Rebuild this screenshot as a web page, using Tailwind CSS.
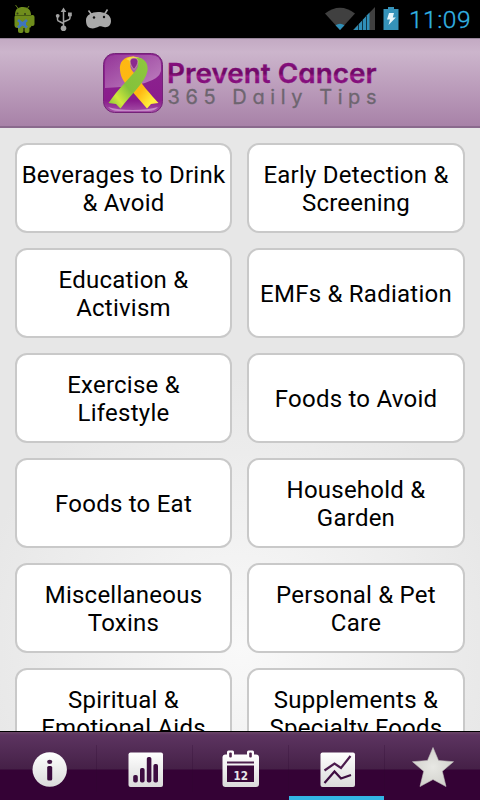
<!DOCTYPE html>
<html lang="en">
<head>
    <meta charset="UTF-8">
    <meta name="viewport" content="width=device-width, initial-scale=1.0">
    <title>Prevent Cancer - 365 Daily Tips</title>
    <script src="https://cdn.jsdelivr.net/npm/@tailwindcss/browser@4"></script>
</head>
<body class="w-[480px] h-[800px] overflow-hidden flex flex-col bg-black font-['Roboto',sans-serif]">
    <!-- Status bar -->
    <div class="h-[38px] shrink-0 bg-black flex items-center">
        <svg class="w-[120px] h-[38px]" viewBox="0 0 120 38">
            <g fill="#6f8d1c">
                <path d="M15 15c0-6 3-8 8-8s8 3 8 8z"/>
                <path d="M15.500 5l3 4M29 6l-2 3" stroke="#5f7a1a" stroke-width="1"/>
                <rect x="14.500" y="14.500" width="17" height="13.500" rx="3"/>
                <rect x="30" y="15" width="4.500" height="11" rx="2"/>
                <rect x="18" y="26" width="5.500" height="7" rx="2"/>
                <rect x="24.500" y="26" width="5" height="7" rx="2"/>
            </g>
            <path d="M15 15.500h16" stroke="#485f12"/>
            <circle cx="17.500" cy="13.500" r="1" fill="#333c18"/>
            <circle cx="25" cy="14" r="1" fill="#333c18"/>
            <path d="M18 20l9 7.500M27 20l-9 7.500M19 23.500h7" stroke="#3f75bd" stroke-width="2.800" fill="none"/>
            <g stroke="#a3a3a3" stroke-width="1.500" fill="none">
                <path d="M63.500 11v16M57.500 16v3.500q0 1.500 2 2l4 2M70 15v3q0 1.500-2 2l-4.500 2"/>
            </g>
            <g fill="#a3a3a3">
                <path d="M63.500 7.500l2.800 4.500h-5.600z"/>
                <circle cx="63.500" cy="28.300" r="2.800"/>
                <circle cx="57.700" cy="15.800" r="1.900"/>
                <rect x="68" y="12.500" width="3.800" height="3.800"/>
            </g>
            <path d="M88.500 10.500l3 4M107.500 9.500l-2.500 4" stroke="#a9a9a9" stroke-width="1.600"/>
            <path d="M86 20c0-5 6-8 12-8s13 2 13 9c0 4-3 7-7 6-2 0-3-1-5-.500-3 1.500-6 2.500-9 1.500-3-1-4-4-4-8z" fill="#a9a9a9"/>
            <circle cx="94" cy="17.500" r="1.200" fill="#111"/>
            <circle cx="104" cy="17" r="1.200" fill="#111"/>
        </svg>
        <div class="flex-1"></div>
        <svg class="w-[78px] h-[38px]" viewBox="322 0 78 38">
            <path d="M325 13.500Q340 2 355 13.500L340 30z" fill="#404040"/>
            <path d="M335.500 25.200q4.500-3 9 0L340 30z" fill="#2f8fb8"/>
            <path d="M353 30L375 7v23z" fill="#404040"/>
            <path d="M353.500 30L369.500 12.500V30z" fill="#2f8fb8"/>
            <path d="M358.500 24v6M362.500 20v10M366.500 15v15" stroke="#123544" stroke-width="1"/>
            <path d="M383.500 9h4.500V7h6v2h4.500v21h-15z" fill="#3592b9"/>
            <path d="M389 13h5l-1.200 4.500h3L388.500 25l1.500-5.500h-3z" fill="#e8f5fa"/>
        </svg>
        <svg class="w-[80px] h-[38px]" viewBox="400 0 80 38">
            <text x="409" y="28" textLength="61.500" font-family="Roboto" font-size="24.500" font-weight="300" fill="#33b5e5" stroke="#33b5e5" stroke-width=".3">11:09</text>
        </svg>
    </div>

    <!-- Header with logo -->
    <div class="h-[90px] shrink-0 border-t border-[#98869b] border-b-2 border-b-[#8a6a8d] bg-linear-to-b from-[#c3aac3] via-[#ccb5cc] via-15% to-[#a882a8]">
        <svg class="w-[480px] h-[87px]" viewBox="0 39 480 87">
            <defs>
                <linearGradient id="badge" x1="0" y1="0" x2="0" y2="1">
                    <stop offset="0" stop-color="#8c2590"/>
                    <stop offset=".8" stop-color="#8a1c8c"/>
                    <stop offset="1" stop-color="#a653a8"/>
                </linearGradient>
                <linearGradient id="shine" x1="0" y1="0" x2="1" y2="1">
                    <stop offset="0" stop-color="#fff" stop-opacity=".08"/>
                    <stop offset="1" stop-color="#fff" stop-opacity=".45"/>
                </linearGradient>
                <linearGradient id="green" x1="1" y1="0" x2="0" y2="1">
                    <stop offset="0" stop-color="#8fc63e"/>
                    <stop offset=".55" stop-color="#84c23b"/>
                    <stop offset=".78" stop-color="#d2e83c"/>
                    <stop offset="1" stop-color="#75bd3c"/>
                </linearGradient>
                <linearGradient id="yellow" x1="0" y1="0" x2="1" y2="1">
                    <stop offset="0" stop-color="#fdb813"/>
                    <stop offset=".6" stop-color="#ffb812"/>
                    <stop offset=".85" stop-color="#fff23c"/>
                    <stop offset="1" stop-color="#fdd94a"/>
                </linearGradient>
                <linearGradient id="title" x1="0" y1="0" x2="0" y2="1">
                    <stop offset=".2" stop-color="#850f7d"/>
                    <stop offset=".5" stop-color="#6d0764"/>
                    <stop offset=".6" stop-color="#9c1c8a"/>
                    <stop offset=".7" stop-color="#850f7d"/>
                </linearGradient>
            </defs>
            <g transform="translate(103 53)">
                <rect x=".5" y=".5" width="59" height="59" rx="11" fill="url(#badge)" stroke="#742378"/>
                <path d="M2 12Q2 2 12 2H48Q58 2 58 12V18Q55 33 2 35z" fill="url(#shine)"/>
                <path d="M5 54Q9 58 15 58H45Q52 58 55 54Q45 57 30 57Q14 57 5 54z" fill="#c58bc7"/>
                <path d="M31 3.500C21 3 16 9 17 17C17.500 25 22 30 27 36L44 55.500L48 51L55.500 50C48 42 37 29 31 20C26 15 26 9 31 8z" fill="url(#yellow)"/>
                <path d="M23 6Q30 1 39 6Q36 9 34 8Q30 4.500 27 8z" fill="#f4dc45"/>
                <path d="M35 4.500C41 5 45.500 10 44.500 18C42 30 28 41 17.500 55.500L13 51L5.500 50C15 36 27 25 33 17C36 13 36 8 32 5z" fill="url(#green)"/>
                <path d="M31 5C36.500 5 36 11 31 16.500C26 11 25.500 5 31 5z" fill="#8b2890" stroke="#dccb9a" stroke-width=".6"/>
            </g>
            <text x="167" y="83.300" textLength="209.500" lengthAdjust="spacingAndGlyphs" font-family="Inter" font-size="26.500" font-weight="600" fill="url(#title)" stroke="url(#title)" stroke-width=".3" class="[font-feature-settings:'cv11']">Prevent Cancer</text>
            <text x="167.500" y="104.300" textLength="209" font-family="Inter" font-size="20" font-weight="400" fill="#6d656f" stroke="#6d656f" stroke-width=".3" class="[font-feature-settings:'cv11']">365 Daily Tips</text>
        </svg>
    </div>

    <!-- Categories -->
    <main class="h-[603px] shrink-0 overflow-hidden bg-[radial-gradient(circle_at_50%_86%,#f9f9f9,#e7e7e7_270px)] px-[15px] pt-[15px]">
        <div class="grid grid-cols-[217px_218px] auto-rows-[90px] gap-[15px] text-2xl/7 tracking-[0.24px] text-black text-center *:flex *:items-center *:justify-center *:bg-white *:border-2 *:border-[#c9c9c9] *:rounded-xl *:whitespace-nowrap *:pt-0.5">
            <button>Beverages to Drink<br>&amp; Avoid</button>
            <button>Early Detection &amp;<br>Screening</button>
            <button>Education &amp;<br>Activism</button>
            <button>EMFs &amp; Radiation</button>
            <button>Exercise &amp;<br>Lifestyle</button>
            <button>Foods to Avoid</button>
            <button>Foods to Eat</button>
            <button>Household &amp;<br>Garden</button>
            <button>Miscellaneous<br>Toxins</button>
            <button>Personal &amp; Pet<br>Care</button>
            <button>Spiritual &amp;<br>Emotional Aids</button>
            <button>Supplements &amp;<br>Specialty Foods</button>
        </div>
    </main>

    <!-- Tab bar -->
    <nav class="h-[69px] shrink-0 border-t border-black bg-[linear-gradient(#6b4668_0px,#5c3460_3px,#452047_37px,#340235_38px,#340235_100%)]">
        <svg class="w-[480px] h-[68px]" viewBox="0 732 480 68">
            <defs>
                <linearGradient id="icon" x1="0" y1="0" x2="0" y2="1">
                    <stop offset="0" stop-color="#fff"/>
                    <stop offset="1" stop-color="#dadada"/>
                </linearGradient>
                <radialGradient id="star">
                    <stop offset="0" stop-color="#e8e8e4"/>
                    <stop offset="1" stop-color="#d3d3ce"/>
                </radialGradient>
            </defs>
            <path d="M96.500 745v47M192.500 745v47M288.500 745v47M384.500 745v47" stroke="#2a0630" stroke-opacity=".25"/>

            <!-- info -->
            <circle cx="49.700" cy="769.500" r="17.200" fill="url(#icon)"/>
            <ellipse cx="49.700" cy="761.800" rx="2.600" ry="2.100" fill="#451947"/>
            <rect x="47.200" y="766" width="5" height="14.500" rx="1.500" fill="#3a0a3d"/>

            <!-- bar chart -->
            <rect x="128.500" y="752.500" width="34.500" height="34.500" rx="2" fill="url(#icon)"/>
            <g fill="#3d0d40">
                <rect x="133.200" y="775" width="4.600" height="7.500" rx="1.800"/>
                <rect x="140" y="768" width="4.600" height="14.500" rx="1.800"/>
                <rect x="146.800" y="757" width="4.600" height="25.500" rx="1.800"/>
                <rect x="153.400" y="764" width="4.600" height="18.500" rx="1.800"/>
            </g>

            <!-- calendar -->
            <rect x="222.500" y="754.500" width="36.500" height="32.500" rx="3" fill="url(#icon)"/>
            <rect x="227" y="750.500" width="7" height="8" rx="1.500" fill="#fff"/>
            <rect x="247" y="750.500" width="7" height="8" rx="1.500" fill="#fff"/>
            <rect x="229.200" y="752.500" width="2.600" height="5" rx="1" fill="#52264f"/>
            <rect x="249.200" y="752.500" width="2.600" height="5" rx="1" fill="#52264f"/>
            <path d="M227 762.500h27" stroke="#4c204d" stroke-width="2"/>
            <rect x="227" y="765.500" width="27" height="16.500" fill="#380839"/>
            <text x="240.700" y="780" text-anchor="middle" font-family="DejaVu Sans" font-size="12" font-weight="700" textLength="14.500" lengthAdjust="spacingAndGlyphs" fill="#e9e9e9">12</text>

            <!-- line chart -->
            <rect x="320.500" y="752.500" width="34.500" height="34.500" rx="2" fill="url(#icon)"/>
            <path d="M324.500 770.500L334.500 763.500L341 768L350.500 756" fill="none" stroke="#4b1b4d" stroke-width="2.200"/>
            <path d="M324.500 783L334.500 771.500L341 778.500L351 775" fill="none" stroke="#3d0d40" stroke-width="2.200"/>

            <!-- star -->
            <path d="M433 747.500L438.500 760.500L453.500 761.700L442.300 771.300L446 786.500L433 779.500L420 786.500L423.700 771.300L412.500 761.700L427.500 760.500z" fill="url(#star)" stroke="#c4c2bf" stroke-width=".6"/>

            <rect x="289" y="796" width="95" height="4" fill="#33b5e5"/>
        </svg>
    </nav>
</body>
</html>
